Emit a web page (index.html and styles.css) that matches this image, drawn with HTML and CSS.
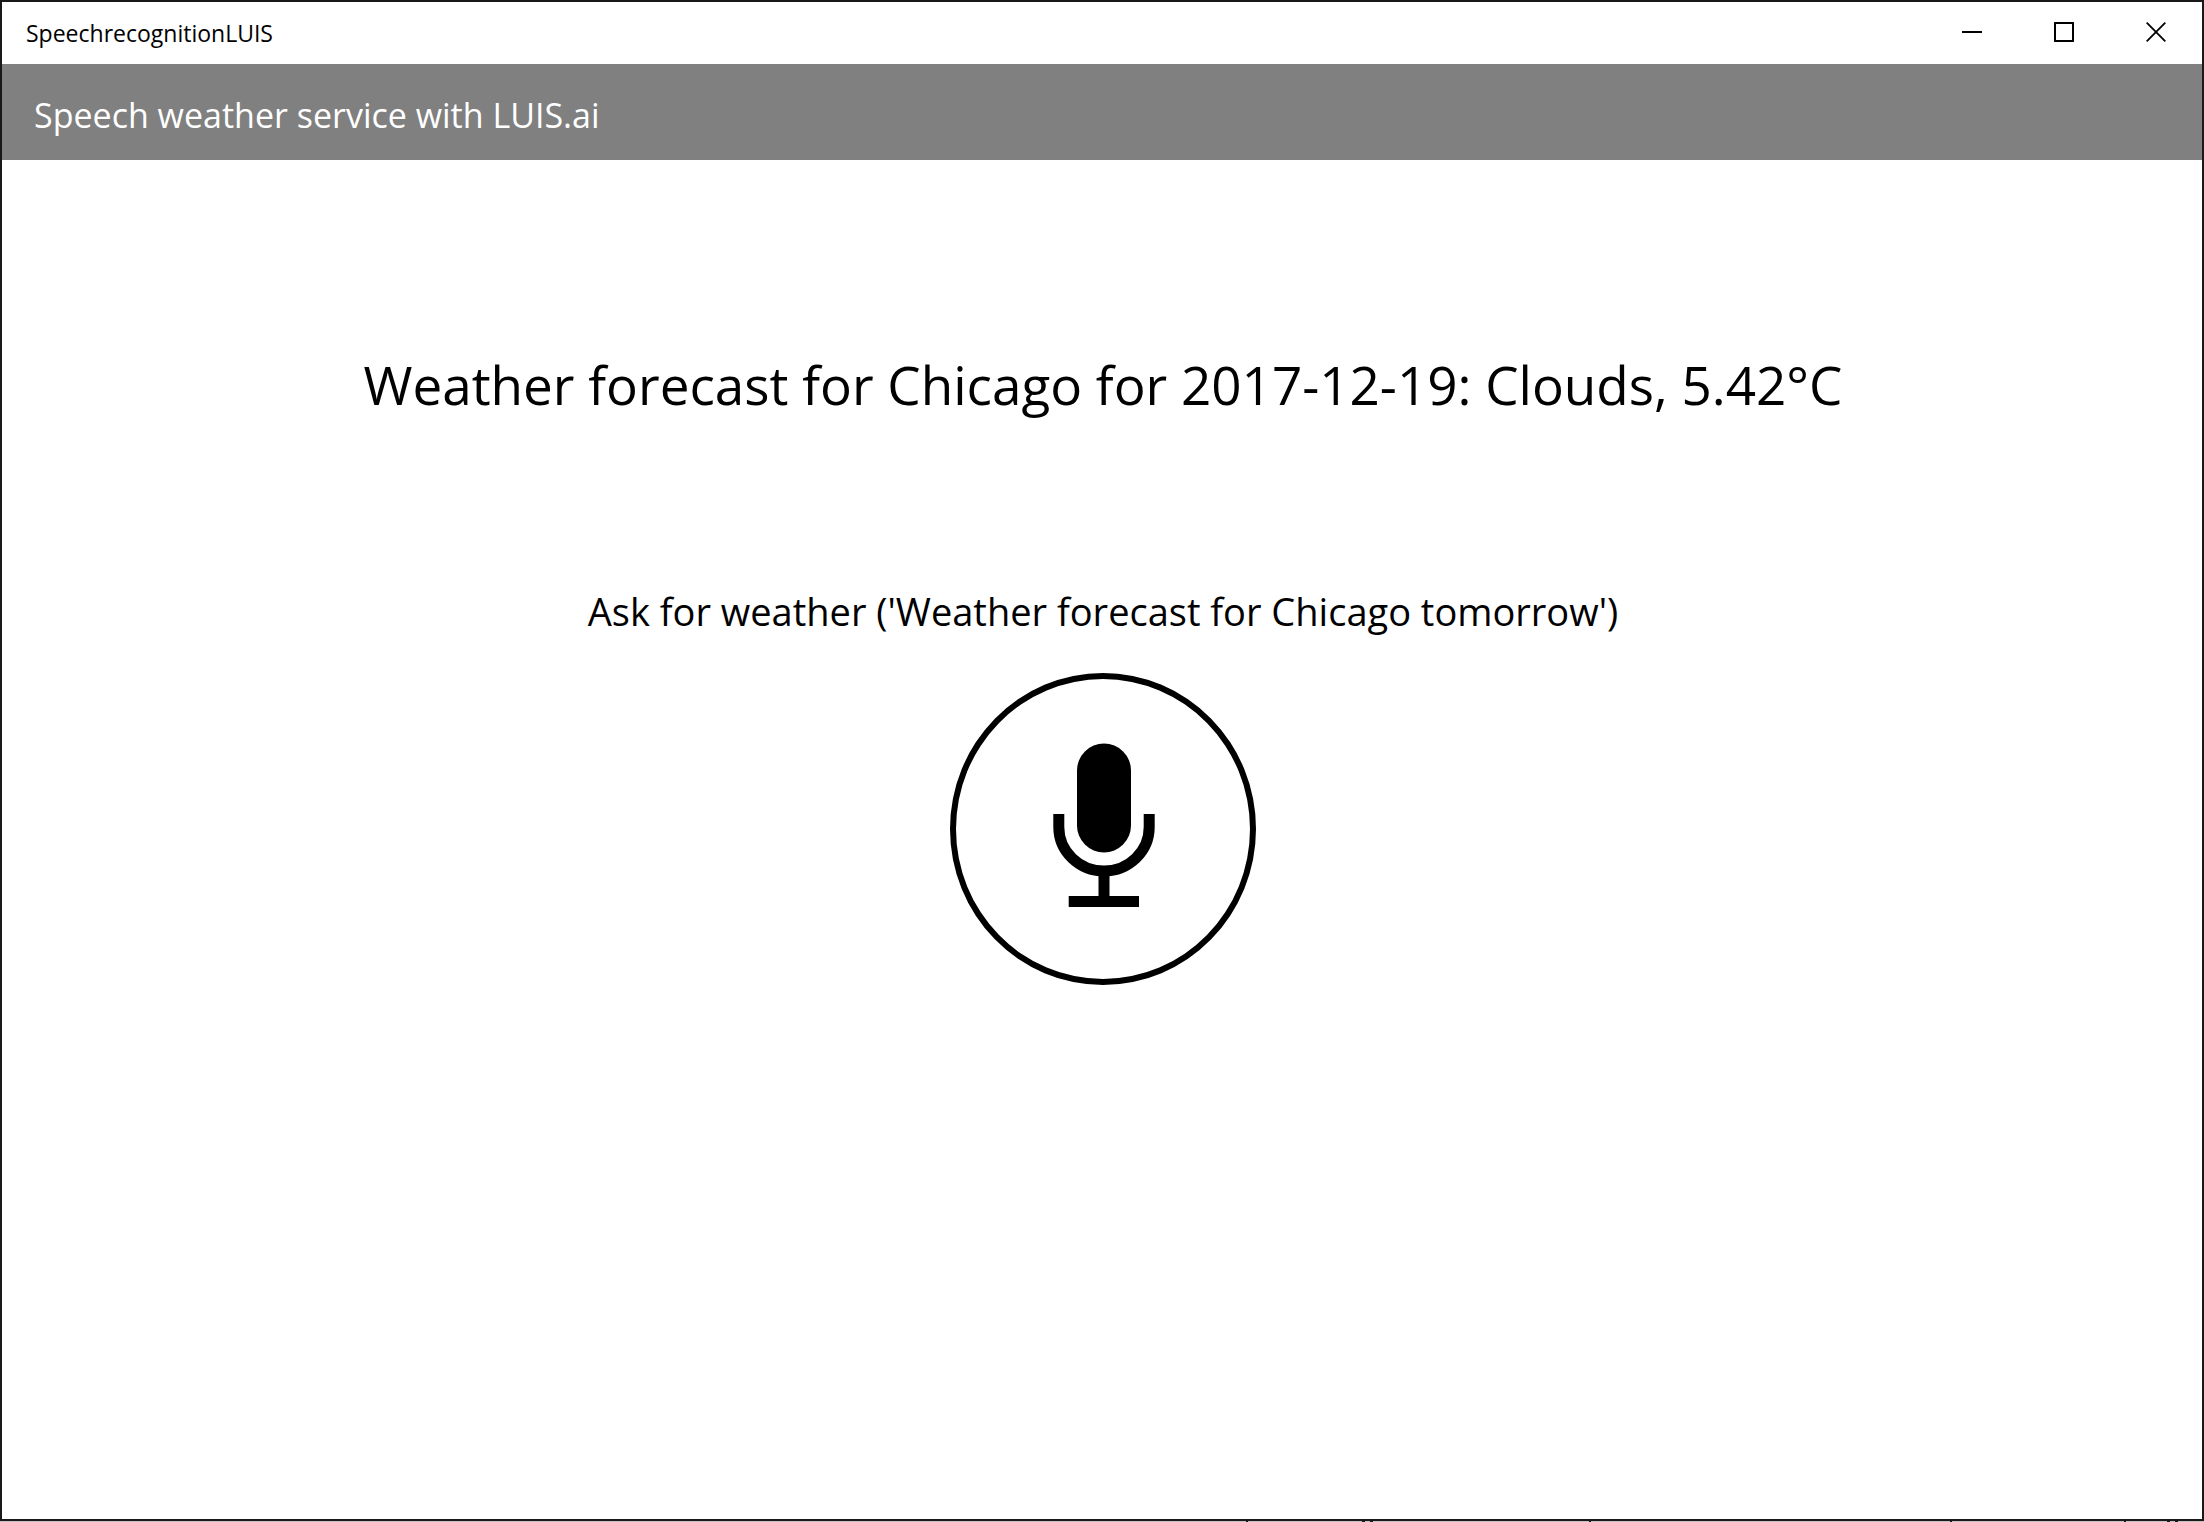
FILE: index.html
```
<!DOCTYPE html>
<html lang="en">
<head>
<meta charset="utf-8">
<meta name="viewport" content="width=device-width, initial-scale=1">
<title>SpeechrecognitionLUIS</title>
<link rel="stylesheet" href="styles.css">
</head>
<body>
<div class="window">
  <div class="titlebar">
    <span class="titlebar-name">SpeechrecognitionLUIS</span>
    <div class="window-controls">
      <button class="window-button" type="button" aria-label="Minimize">
        <svg width="20" height="20" viewBox="0 0 20 20" aria-hidden="true"><path d="M0 10H20" stroke="#000" stroke-width="2"/></svg>
      </button>
      <button class="window-button" type="button" aria-label="Maximize">
        <svg width="20" height="20" viewBox="0 0 20 20" aria-hidden="true"><path d="M1 1H19V19H1Z" fill="none" stroke="#000" stroke-width="2"/></svg>
      </button>
      <button class="window-button" type="button" aria-label="Close">
        <svg width="20" height="20" viewBox="0 0 20 20" aria-hidden="true"><path d="M0.7 0.7L19.3 19.3M19.3 0.7L0.7 19.3" stroke="#000" stroke-width="1.8"/></svg>
      </button>
    </div>
  </div>
  <header class="app-header">
    <h1 class="app-title">Speech weather service with LUIS.ai</h1>
  </header>
  <main class="content">
    <p class="forecast">Weather forecast for Chicago for 2017-12-19: Clouds, 5.42°C</p>
    <p class="prompt">Ask for weather ('Weather forecast for Chicago tomorrow')</p>
    <button class="mic-button" type="button" aria-label="Start speech recognition">
      <svg width="294" height="300" viewBox="0 0 294 300" aria-hidden="true">
        <rect x="121" y="64.500" width="54" height="109" rx="27"/>
        <path d="M102.800 135V148a45.200 44 0 0 0 90.400 0V135" fill="none" stroke="#000" stroke-width="11"/>
        <path d="M148 190V219M112.700 222.500H183" fill="none" stroke="#000" stroke-width="11"/>
      </svg>
    </button>
  </main>
</div>
<div class="backdrop"></div>
</body>
</html>
```
FILE: styles.css
```
* {
  box-sizing: border-box;
}

body {
  margin: 0;
  min-height: 100vh;
  display: flex;
  flex-direction: column;
  background: #fff;
  color: #000;
  font-family: "Open Sans", "Noto Sans", sans-serif;
}

h1,
p {
  margin: 0;
  font-weight: 400;
}

button {
  padding: 0;
  background: none;
  color: inherit;
  font: inherit;
}

.window {
  flex: 1;
  display: flex;
  flex-direction: column;
  border: 2px solid #1a1819;
}

.titlebar {
  display: flex;
  justify-content: space-between;
  align-items: flex-start;
  height: 62px;
  padding-left: 24px;
}

.titlebar-name {
  font-size: 23px;
  line-height: 62px;
}

.window-controls {
  display: flex;
}

.window-button {
  display: flex;
  align-items: center;
  justify-content: center;
  width: 92px;
  height: 60px;
  border: 0;
}

.app-header {
  padding: 27px 32px 21px;
  background: #808080;
  color: #fff;
}

.app-title {
  font-size: 34px;
  line-height: 48px;
}

.content {
  display: flex;
  flex-direction: column;
  align-items: center;
  padding: 189px 24px 24px 26px;
  text-align: center;
}

.forecast {
  font-size: 53px;
  line-height: 72px;
}

.prompt {
  margin-top: 162px;
  font-size: 38px;
  line-height: 56px;
}

.mic-button {
  display: flex;
  width: 306px;
  height: 312px;
  margin-top: 34px;
  border: 6px solid #000;
  border-radius: 50%;
}

/* Sliver of the desktop showing under the window */
.backdrop {
  height: 1px;
  background:
    linear-gradient(#1a1819, #1a1819) right 956px top / 2px 1px no-repeat,
    linear-gradient(#1a1819, #1a1819) right 839px top / 3px 1px no-repeat,
    linear-gradient(#1a1819, #1a1819) right 831px top / 3px 1px no-repeat,
    linear-gradient(#1a1819, #1a1819) right 613px top / 2px 1px no-repeat,
    linear-gradient(#1a1819, #1a1819) right 252px top / 2px 1px no-repeat,
    linear-gradient(#1a1819, #1a1819) right 78px top / 2px 1px no-repeat,
    linear-gradient(#1a1819, #1a1819) right 34px top / 3px 1px no-repeat,
    linear-gradient(#1a1819, #1a1819) right 26px top / 3px 1px no-repeat,
    #c4c0bf;
}
```
